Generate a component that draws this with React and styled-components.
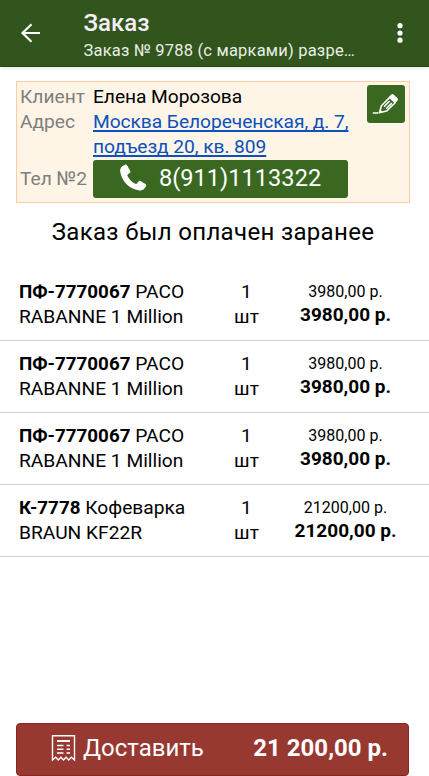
import styled, { createGlobalStyle } from 'styled-components'

const GlobalStyle = createGlobalStyle`
  * {
    box-sizing: border-box;
  }
  body {
    margin: 0;
    background: #fff;
    color: #000;
    font-family: Roboto, "Liberation Sans", sans-serif;
  }
`

const Screen = styled.div`
  height: 776px;
  display: flex;
  flex-direction: column;
  overflow: hidden;
`

const Header = styled.header`
  flex: none;
  display: flex;
  align-items: center;
  height: 67px;
  padding: 0 19px;
  background: #31551d;
  border-bottom: 1px solid #234a0d;
  color: #fff;
  box-shadow: 0 1px 4px rgba(0, 0, 0, 0.12);
`

const IconButton = styled.button`
  flex: none;
  display: flex;
  padding: 0;
  border: 0;
  background: none;
  color: inherit;
`

const Titles = styled.div`
  flex: 1;
  min-width: 0;
  margin-left: 41.5px;
  padding-top: 7px;
`

const Title = styled.h1`
  margin: 0;
  color: #f6effa;
  font-size: 24px;
  font-weight: 500;
  line-height: 27px;
`

const Subtitle = styled.div`
  max-width: 290px;
  overflow: hidden;
  color: #e9efe6;
  font-size: 16.5px;
  letter-spacing: 0.2px;
  line-height: 27px;
  white-space: nowrap;
`

const ClientCard = styled.section`
  flex: none;
  display: flex;
  justify-content: space-between;
  height: 122px;
  margin: 14px 19px 0 16px;
  padding: 2px 4px 3px 3px;
  background: #fef5e6;
  border: 1px solid #fdcf9c;
`

const Details = styled.dl`
  display: grid;
  grid-template-columns: 73px 257px;
  grid-template-rows: 25px 51px 38px;
  margin: 0;
  font-size: 19.2px;
  line-height: 25px;
`

const Label = styled.dt`
  color: #7e7e7e;
  line-height: ${({ $tall }) => ($tall ? '37px' : '25px')};
`

const Value = styled.dd`
  margin: 0;
  letter-spacing: -0.06px;
`

const AddressLink = styled.a`
  color: #0b50bd;
  white-space: nowrap;
  text-decoration: underline;
  text-decoration-skip-ink: none;
  text-decoration-thickness: 2px;
  text-underline-offset: 2px;
`

const PhoneButton = styled.button`
  display: flex;
  align-items: center;
  width: 255px;
  height: 38px;
  padding: 0 0 2px 24px;
  border: 0;
  border-radius: 3px;
  background: #3a6821;
  color: #fff;
  font: 23.6px Roboto, sans-serif;

  svg {
    margin-right: 10px;
  }
`

const EditButton = styled(IconButton)`
  align-items: center;
  justify-content: center;
  width: 38px;
  height: 38px;
  margin-top: 1px;
  border-radius: 3px;
  background: #3a6821;
  color: #fff;
`

const Notice = styled.h2`
  flex: none;
  margin: 12px 0 0;
  padding-right: 3px;
  font-size: 24px;
  font-weight: 400;
  letter-spacing: 0.33px;
  line-height: 34px;
  text-align: center;
`

const Items = styled.ul`
  flex: 1;
  margin: 20px 0 0;
  padding: 0;
  list-style: none;
`

const Item = styled.li`
  display: grid;
  grid-template-columns: 190px 75px 123px;
  height: 72px;
  padding: 10px 0 0 19px;
  border-bottom: 1px solid #d2d2d2;
  font-size: 19.2px;
  line-height: 25px;
`

const Code = styled.strong`
  font-size: 18.8px;
  line-height: 1;
`

const Quantity = styled.div`
  text-align: center;
`

const Price = styled.div`
  font-size: 16px;
  text-align: center;

  strong {
    display: block;
    font-size: 19px;
    line-height: 21px;
  }
`

const DeliverButton = styled.button`
  flex: none;
  display: flex;
  align-items: center;
  height: 53px;
  margin: 0 20px 0 16px;
  padding: 0 20px 3px 34px;
  border: 1px solid #8b2522;
  border-radius: 4px;
  background: #973831;
  color: #fff;
  font: 24px Roboto, sans-serif;

  svg {
    margin-right: 7px;
  }

  strong {
    margin-left: auto;
  }
`

const BackIcon = () => (
  <svg width="23" height="22" viewBox="0 0 23 22" fill="none" stroke="currentColor" strokeWidth="2.2">
    <path d="M21 11H4M12.5 2.2 3.5 11l9 8.8" />
  </svg>
)

const MoreIcon = () => (
  <svg width="20" height="22" viewBox="0 0 20 22" fill="currentColor">
    <circle cx="10" cy="3.7" r="2.6" />
    <circle cx="10" cy="11" r="2.6" />
    <circle cx="10" cy="18.2" r="2.6" />
  </svg>
)

const PhoneIcon = () => (
  <svg width="32" height="32" viewBox="0 0 32 32" fill="currentColor">
    <path d="M5.4 4.2 8 2.8c.9-.4 1.7-.1 2.2.7l3 5.4c.4.8.2 1.6-.5 2.1l-2 1.4c-.5.4-.5.9-.2 1.5 2 3.6 4.5 6.1 7.9 7.9.6.4 1.2.2 1.6-.3l1.5-2c.5-.7 1.3-.8 2-.4l5 3c.8.5 1 1.3.5 2.1l-1.6 2.4c-1.1 1.6-3.2 2.2-5.3 1.8C12 26.6 5.2 19.6 3.3 10.2c-.5-2.6.2-4.9 2.1-6z" />
  </svg>
)

const PencilIcon = () => (
  <svg width="28" height="28" viewBox="0 0 28 28" fill="none" stroke="currentColor">
    <path d="M.8 23h5.8" strokeWidth="1.5" />
    <path d="m7.6 22.6 1.8-6.8 8.3-8.4 5.5 5.3-8.4 8.2z" strokeWidth="1.5" strokeLinejoin="round" />
    <path d="m6.9 23.4 1-4.2 3.3 3.2z" fill="currentColor" stroke="none" />
    <path d="m12 16.8 5.6-5.8m-3.5 7.8 5.7-5.7" strokeWidth="1.6" />
    <path d="m17 7 2-2.2c.9-.9 1.9-.9 2.8-.1l3.5 3.3c.9.9.9 1.8.1 2.7l-2.2 2.3z" fill="currentColor" stroke="none" />
  </svg>
)

const ReceiptIcon = () => (
  <svg width="25" height="28" viewBox="0 0 25 28" fill="none" stroke="currentColor" strokeWidth="1.4">
    <path d="M1.5 26V1.7h22V26l-3.2-2.7-2.6 2.6-2.6-2.6-2.6 2.6-2.6-2.6-2.6 2.6-2.6-2.6z" />
    <path d="M6 7h13" strokeWidth="2" />
    <path d="M6 11.5h6.5m3 0H19M6 15.2h6.5m3 0H19M6 19h6.5m3 0H19" />
  </svg>
)

const items = [
  { code: 'ПФ-7770067', name: 'PACO RABANNE 1 Million', price: '3980,00 р.' },
  { code: 'ПФ-7770067', name: 'PACO RABANNE 1 Million', price: '3980,00 р.' },
  { code: 'ПФ-7770067', name: 'PACO RABANNE 1 Million', price: '3980,00 р.' },
  { code: 'К-7778', name: 'Кофеварка BRAUN KF22R', price: '21200,00 р.' },
]

const App = () => (
  <Screen>
    <GlobalStyle />
    <Header>
      <IconButton aria-label="Назад"><BackIcon /></IconButton>
      <Titles>
        <Title>Заказ</Title>
        <Subtitle>Заказ № 9788 (с марками) разре…</Subtitle>
      </Titles>
      <IconButton aria-label="Меню"><MoreIcon /></IconButton>
    </Header>

    <ClientCard>
      <Details>
        <Label>Клиент</Label>
        <Value>Елена Морозова</Value>
        <Label>Адрес</Label>
        <Value>
          <AddressLink href="#">Москва Белореченская, д. 7,<br />подъезд 20, кв. 809</AddressLink>
        </Value>
        <Label $tall>Тел №2</Label>
        <Value>
          <PhoneButton><PhoneIcon />8(911)1113322</PhoneButton>
        </Value>
      </Details>
      <EditButton aria-label="Изменить"><PencilIcon /></EditButton>
    </ClientCard>

    <Notice>Заказ был оплачен заранее</Notice>

    <Items>
      {items.map(({ code, name, price }, i) => (
        <Item key={i}>
          <div><Code>{code}</Code> {name}</div>
          <Quantity>1<br />шт</Quantity>
          <Price>{price}<strong>{price}</strong></Price>
        </Item>
      ))}
    </Items>

    <DeliverButton>
      <ReceiptIcon />
      Доставить
      <strong>21 200,00 р.</strong>
    </DeliverButton>
  </Screen>
)

export default App
